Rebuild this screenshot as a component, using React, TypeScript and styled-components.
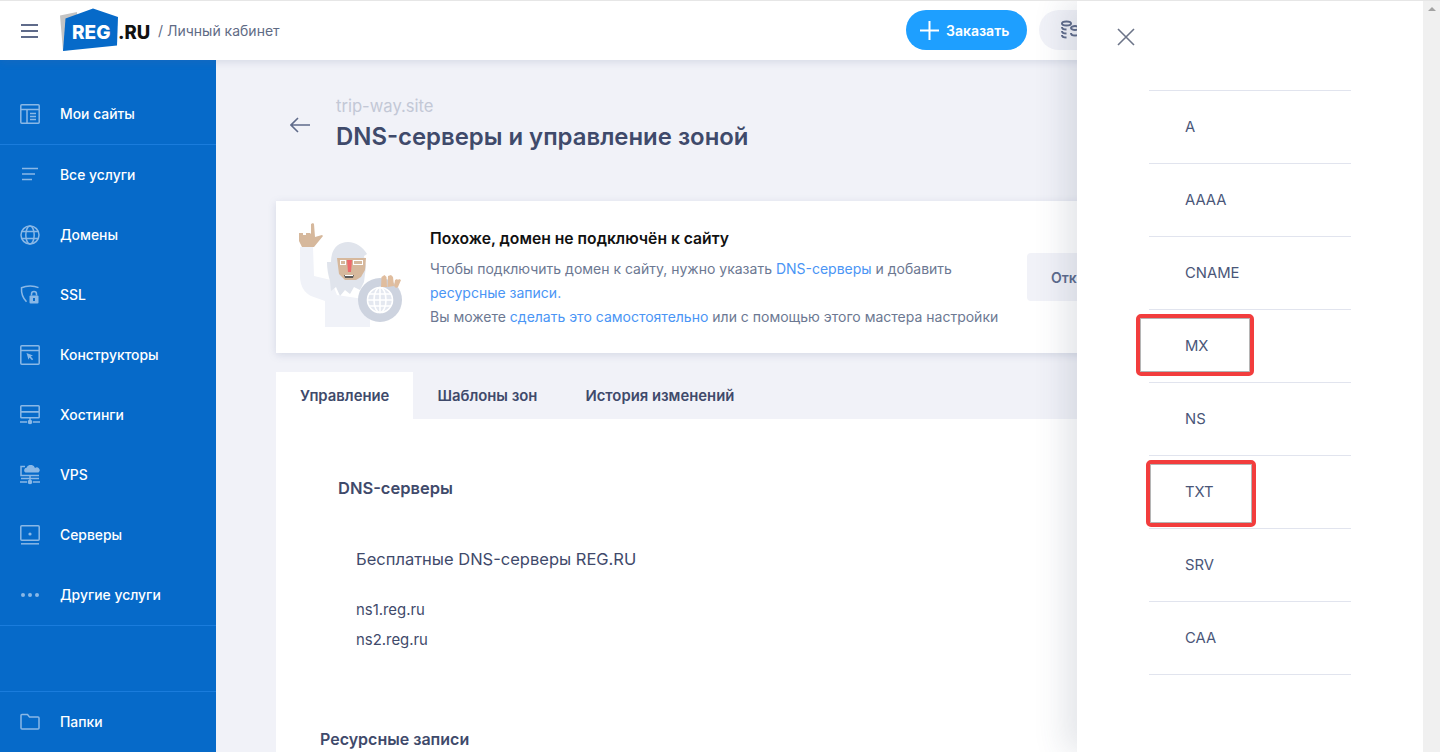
import React from "react";
import styled, { createGlobalStyle } from "styled-components";

const Global = createGlobalStyle`
  html, body { margin: 0; padding: 0; height: 100%; overflow: hidden; }
  body { font-family: Inter, "Noto Sans", sans-serif; color: #3f4a6b; background: #f1f2f8; }
  * { box-sizing: border-box; }
`;

const Page = styled.div`
  position: relative; width: 1440px; height: 752px; overflow: hidden;
  display: flex; flex-direction: column; background: #f1f2f8; border-top: 1px solid #e6e6e6;
`;
const Header = styled.header`
  position: relative; z-index: 2; flex: 0 0 59px; display: flex; align-items: center; background: #fff;
  padding: 0 0 0 21px; box-shadow: 0 2px 8px rgba(90, 105, 150, .18);
`;
const Burger = styled.span`
  width: 17px; height: 14px; display: flex; flex-direction: column; justify-content: space-between; margin-right: 22px;
  i { display: block; height: 2px; background: #5f6b8a; }
`;
const Cabinet = styled.span`
  margin-left: 6px; font-size: 14px; color: #5f6b85; white-space: nowrap;
`;
const HeaderRight = styled.div`
  margin-left: auto; display: flex; gap: 12px; padding-right: 241px; margin-top: -1px;
`;
const OrderButton = styled.div`
  width: 121px; height: 40px; border-radius: 20px; background: #1e9fff; color: #fff; display: flex; align-items: center;
  padding-left: 14px; gap: 7px; font-size: 14px; font-weight: 600;
`;
const CoinsButton = styled.div`
  width: 160px; height: 40px; border-radius: 20px; background: #f1f2f8; display: flex; align-items: center; padding-left: 21px; color: #5f6b8a;
`;
const Body = styled.div`
  flex: 1; display: flex; min-height: 0;
`;
const Sidebar = styled.nav`
  flex: 0 0 216px; background: #066ac9; display: flex; flex-direction: column; padding-top: 24px;
`;
const NavGroup = styled.div<{ $grow?: boolean }>`
  border-bottom: 1px solid #1a7cdc;
  ${(p) => (p.$grow ? "flex: 1;" : "")}
`;
const NavItem = styled.div`
  height: 60px; display: flex; align-items: center; gap: 20px; padding: 0 0 1px 20px; color: #fff; font-size: 13.9px; font-weight: 500;
  svg { flex: 0 0 20px; width: 20px; height: 20px; color: #8ab8e6; }
`;
const Main = styled.main`
  flex: 1; min-width: 0; padding: 35px 0 0 60px; display: flex; flex-direction: column;
`;
const TitleRow = styled.div`
  display: flex; align-items: center; gap: 26px; padding-left: 14px; height: 62px; margin-bottom: 44px;
  svg { color: #5f6b8a; flex: none; margin-top: -2px; }
`;
const Domain = styled.div`
  font-size: 16.6px; line-height: 22px; color: #c3c8d6; margin-top: -6px;
`;
const Title = styled.h1`
  margin: 5px 0 0; font-size: 23.9px; line-height: 30px; font-weight: 600; color: #3f4a6b;
`;
const Banner = styled.section`
  height: 152px; background: #fff; display: flex; align-items: center; padding-left: 20px;
  box-shadow: 0 2px 8px rgba(90, 105, 150, .18); margin-bottom: 19px;
`;
const Yeti = styled.svg`
  flex: 0 0 110px; width: 110px; height: 110px; margin-right: 24px; margin-top: -4px;
`;
const BannerText = styled.div`
  width: 597px; flex: none; margin-top: 4px;
`;
const BannerTitle = styled.div`
  font-size: 15.7px; line-height: 20px; font-weight: 600; color: #111; margin-bottom: 8px; white-space: nowrap;
`;
const BannerLine = styled.div`
  font-size: 14px; line-height: 24px; color: #6c7892; white-space: nowrap;
`;
const TextLink = styled.span`
  color: #4a95f5;
`;
const OpenButton = styled.div`
  width: 200px; height: 48px; background: #f1f2f8; border-radius: 4px; padding-left: 24px; display: flex; align-items: center;
  font-size: 14px; font-weight: 600; color: #5b6a8c; flex: none;
`;
const Tabs = styled.div`
  display: flex; height: 47px;
`;
const Tab = styled.div<{ $active?: boolean }>`
  padding: 0 24px; display: flex; align-items: center; font-size: 14.85px; font-weight: 600; color: #3f4a6b;
  background: ${(p) => (p.$active ? "#fff" : "transparent")};
`;
const Content = styled.div`
  flex: 1; background: #fff; padding: 58px 0 0 62px; min-height: 0;
`;
const SectionTitle = styled.div`
  font-size: 16.5px; line-height: 22px; font-weight: 600; color: #3f4a6b;
`;
const ServerBlock = styled.div`
  padding: 49px 0 0 18px; height: 229px;
`;
const ServerName = styled.div`
  font-size: 16.5px; line-height: 22px; color: #3f4a6b; margin-bottom: 25px;
`;
const ServerHost = styled.div`
  font-size: 14.9px; line-height: 30px; color: #3f4a6b;
`;
const ResourceTitle = styled(SectionTitle)`
  margin-left: -18px; font-size: 16px;
`;
const Drawer = styled.aside`
  position: absolute; z-index: 3; top: 0; bottom: 0; left: 1077px; width: 346px; background: #fff;
  box-shadow: -12px 0 30px rgba(60, 70, 100, .14); padding: 89px 72px 0;
`;
const Scroll = styled.div`
  position: absolute; z-index: 4; top: 0; right: 0; bottom: 0; width: 17px; background: #f0f0f0;
  &::before {
    content: ""; position: absolute; left: 5px; top: 6px;
    border-left: 4px solid transparent; border-right: 4px solid transparent; border-bottom: 4px solid #a3a3a3;
  }
`;
const Close = styled.svg`
  position: absolute; left: 40px; top: 27px; width: 18px; height: 18px; color: #6c7488;
`;
const RecordList = styled.div`
  border-top: 1px solid #e1e4ee;
`;
const Record = styled.div`
  height: 73px; border-bottom: 1px solid #e1e4ee; display: flex; align-items: center; padding-left: 36px; font-size: 14.8px; color: #4a5678;
`;
const Mark = styled.div<{ $left: number; $top: number; $w: number; $h: number }>`
  position: absolute; z-index: 5; left: ${(p) => p.$left}px; top: ${(p) => p.$top}px; width: ${(p) => p.$w}px; height: ${(p) => p.$h}px;
  border: 4px solid #f23d3d; border-radius: 5px; box-shadow: inset 0 0 0 1px rgba(90, 90, 90, .45);
`;

const S = { fill: "none", stroke: "currentColor", strokeWidth: 1.5 } as const;
const icons: Record<string, React.ReactNode> = {
  sites: <svg viewBox="0 0 20 20" {...S}><rect x=".8" y=".8" width="18.4" height="18.4" rx="1" /><path d="M1 5.5h18M7 5.5V19M10 9.5h6M10 12.5h6M10 15.5h6" /></svg>,
  all: <svg viewBox="0 0 20 20" {...S} strokeWidth={1.7}><path d="M2 3.5h16M2 9h13M2 14.500h10" /></svg>,
  globe: <svg viewBox="0 0 20 20" {...S}><circle cx="10" cy="10" r="9" /><ellipse cx="10" cy="10" rx="4.2" ry="9" /><path d="M2 6.5h16M2 13.5h16" /></svg>,
  ssl: <svg viewBox="0 0 20 20" {...S}><path d="M18.5 2.7C14 .4 6.500.4 1.500 2.700c-.3 5 1 10 5 14" /><rect x="9.500" y="10.500" width="9" height="8" fill="currentColor" stroke="none" rx="1" /><path d="M11.500 10.500V9a2.500 2.500 0 0 1 5 0v1.500" /><rect x="13" y="13" width="2" height="3" fill="#066ac9" stroke="none" /></svg>,
  builder: <svg viewBox="0 0 20 20" {...S}><rect x=".8" y=".8" width="18.400" height="18.400" rx="1" /><path d="M1 5.500h18" /><path d="M6.500 8l6.500 2.500-2.300 1 2.500 2.800-1.200 1-2.500-2.800-1 2.300z" fill="currentColor" stroke="none" /></svg>,
  hosting: <svg viewBox="0 0 20 20" {...S}><rect x=".8" y=".8" width="18.400" height="6" rx=".8" /><rect x=".8" y="6.800" width="18.400" height="6" rx=".8" /><path d="M10 13v3M0 17h7M13 17h7" /><circle cx="10" cy="17" r="2.300" fill="currentColor" stroke="none" /></svg>,
  vps: <svg viewBox="0 0 20 20" {...S}><path d="M5 1.500H1v9h18" /><path d="M5.500 7.500a2.500 2.500 0 0 1 1-4.700A4.500 4.500 0 0 1 15 3a2.400 2.400 0 0 1 3.500 4.500z" fill="currentColor" stroke="none" /><path d="M10 11v5M0 17h7M13 17h7M1 13.500h18" /><circle cx="10" cy="17" r="2.300" fill="currentColor" stroke="none" /></svg>,
  servers: <svg viewBox="0 0 20 20" {...S}><rect x=".8" y=".8" width="18.400" height="14.400" rx="1" /><path d="M1 18.800h18" /><circle cx="10" cy="9" r="1.600" fill="currentColor" stroke="none" /></svg>,
  more: <svg viewBox="0 0 20 20" fill="currentColor"><circle cx="3" cy="10" r="2" /><circle cx="10" cy="10" r="2" /><circle cx="17" cy="10" r="2" /></svg>,
  folder: <svg viewBox="0 0 20 20" {...S}><path d="M1 3.500a1 1 0 0 1 1-1h5.500l2 2.500H18a1 1 0 0 1 1 1v10a1 1 0 0 1-1 1H2a1 1 0 0 1-1-1z" /></svg>,
};

const Logo = () => (
  <svg width="92" height="46" viewBox="0 0 92 46" style={{ flex: "none" }}>
    <path d="M0 7.500 17 4 20 40 3 43z" fill="#c4c4c4" />
    <path d="M5.500 10.500 33 .500 58 9 57 37.500 3 43z" fill="#066ac9" />
    <text x="12" y="31" fontFamily="Inter, sans-serif" fontWeight="800" fontSize="19" fill="#fff">REG</text>
    <text x="58" y="31" fontFamily="Inter, sans-serif" fontWeight="800" fontSize="18.500" fill="#111">.RU</text>
  </svg>
);

const YetiArt = () => (
  <Yeti viewBox="20 20 110 110">
    <path d="M24 47h13l1 29 17 4 6 15 33 5v27H49v-26l-14-5c-8-4-11-12-11-20z" fill="#f0f2f8" />
    <path d="M23 33h4v2h3v-2h4l1 1V24l2-1 1 1 1 13 7-2 1 1-9 11H26l-3-6z" fill="#d6b89c" />
    <path d="M55 62c0-13 7-20 17-20 8 0 15 5 19 12l-3 2 2 10-2 16-4 8-6-3-4 7-5-4-5 6-4-9-5 4-1-10c-2-6-3-13-3-19z" fill="#e0e4ec" />
    <path d="M61 58h29l-1 12-4 7-5 3H69l-6-6z" fill="#d6b89c" />
    <path d="M64 60h6v1h-6zM64 60h1v4h-1zM69 60h1v4h-1zM64 64h6v1h-6zM77 60h10v1H77zM77 60h1v4h-1zM86 60h1v4h-1zM77 64h10v1H77z" fill="#fff" />
    <path d="M71 60h5l-1 12h-3z" fill="#ee6a6c" />
    <path d="M68 75h10l-1 3h-8z" fill="#5a5a5a" />
    <path d="M69 75h8v1h-8z" fill="#fff" />
    <circle cx="104" cy="100" r="22" fill="#cdd3df" />
    <g fill="none" stroke="#fff" strokeWidth="1.600">
      <circle cx="104" cy="100" r="12.500" fill="#e4e8f0" />
      <ellipse cx="104" cy="100" rx="6" ry="12.500" />
      <path d="M93 94h22M93 106h22M91.500 100h25M104 87.500v25" />
    </g>
    <path d="M105 87l.500-10 3-2 2 2 .500 10zM111.500 87l.500-11 3-1 2 2 1 9zM118 86l1-6 2-1 1 1 1-1 2 1-3 7-2 1z" fill="#e0bd9e" />
  </Yeti>
);

const navTop = [
  ["all", "Все услуги"], ["globe", "Домены"], ["ssl", "SSL"], ["builder", "Конструкторы"],
  ["hosting", "Хостинги"], ["vps", "VPS"], ["servers", "Серверы"], ["more", "Другие услуги"],
];
const records = ["A", "AAAA", "CNAME", "MX", "NS", "TXT", "SRV", "CAA"];

export default function App() {
  return (
    <Page>
      <Global />
      <Header>
        <Burger><i /><i /><i /></Burger>
        <Logo />
        <Cabinet>/ Личный кабинет</Cabinet>
        <HeaderRight>
          <OrderButton>
            <svg width="19" height="19" viewBox="0 0 19 19" stroke="#fff" strokeWidth="2"><path d="M9.500 0v19M0 9.500h19" /></svg>
            Заказать
          </OrderButton>
          <CoinsButton>
            <svg width="20" height="20" viewBox="0 0 20 20" fill="none" stroke="currentColor" strokeWidth="2">
              <ellipse cx="6.500" cy="3.500" rx="4.500" ry="2" />
              <path d="M2 7c0 1.500 2 2.500 4.500 2.500M2 11c0 1.500 2 2.500 4.500 2.500M2 15c0 1.500 2 2.500 4.500 2.500M11 8c0-1 2-2 4-2s4 1 4 2-2 2-4 2-4-1-4-2zM11 13c0 1.500 2 2.500 4 2.500s4-1 4-2.500" />
            </svg>
          </CoinsButton>
        </HeaderRight>
      </Header>
      <Body>
        <Sidebar>
          <NavGroup><NavItem>{icons.sites}Мои сайты</NavItem></NavGroup>
          <NavGroup>
            {navTop.map(([k, t]) => <NavItem key={k}>{icons[k]}{t}</NavItem>)}
          </NavGroup>
          <NavGroup $grow />
          <NavItem>{icons.folder}Папки</NavItem>
        </Sidebar>
        <Main>
          <TitleRow>
            <svg width="20" height="16" viewBox="0 0 20 16" fill="none" stroke="currentColor" strokeWidth="1.600"><path d="M20 8H1M8 1 1 8l7 7" /></svg>
            <div>
              <Domain>trip-way.site</Domain>
              <Title>DNS-серверы и управление зоной</Title>
            </div>
          </TitleRow>
          <Banner>
            <YetiArt />
            <BannerText>
              <BannerTitle>Похоже, домен не подключён к сайту</BannerTitle>
              <BannerLine>Чтобы подключить домен к сайту, нужно указать <TextLink>DNS-серверы</TextLink> и добавить</BannerLine>
              <BannerLine><TextLink>ресурсные записи.</TextLink></BannerLine>
              <BannerLine>Вы можете <TextLink>сделать это самостоятельно</TextLink> или с помощью этого мастера настройки</BannerLine>
            </BannerText>
            <OpenButton>Открыть мастер</OpenButton>
          </Banner>
          <Tabs>
            <Tab $active>Управление</Tab>
            <Tab>Шаблоны зон</Tab>
            <Tab>История изменений</Tab>
          </Tabs>
          <Content>
            <SectionTitle>DNS-серверы</SectionTitle>
            <ServerBlock>
              <ServerName>Бесплатные DNS-серверы REG.RU</ServerName>
              <ServerHost>ns1.reg.ru</ServerHost>
              <ServerHost>ns2.reg.ru</ServerHost>
            </ServerBlock>
            <ResourceTitle>Ресурсные записи</ResourceTitle>
          </Content>
        </Main>
      </Body>
      <Drawer>
        <Close viewBox="0 0 18 18" fill="none" stroke="currentColor" strokeWidth="1.600"><path d="M1 1l16 16M17 1 1 17" /></Close>
        <RecordList>
          {records.map((r) => <Record key={r}>{r}</Record>)}
        </RecordList>
      </Drawer>
      <Scroll />
      <Mark $left={1136} $top={313} $w={118} $h={62} />
      <Mark $left={1146} $top={459} $w={110} $h={67} />
    </Page>
  );
}
